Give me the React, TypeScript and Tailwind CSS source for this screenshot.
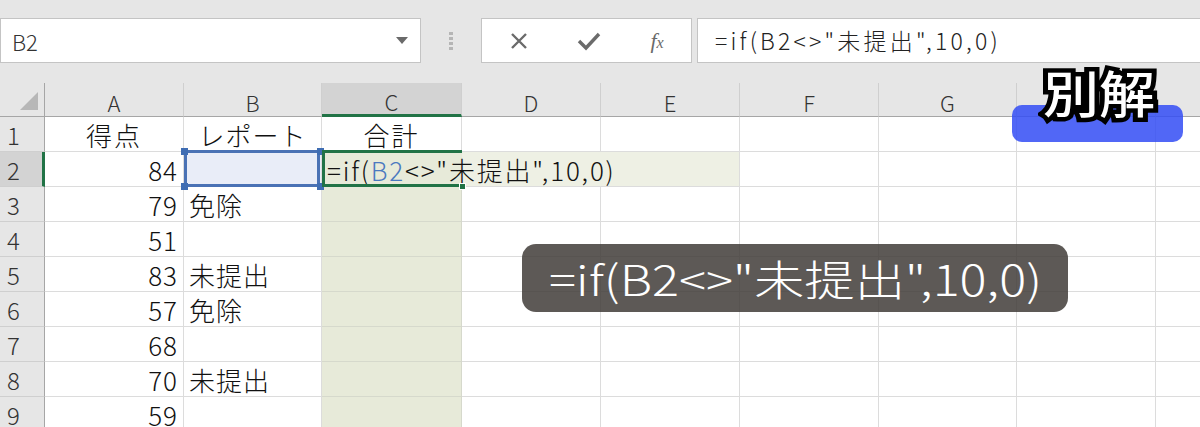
import React from 'react';

const FONT = '"Noto Sans CJK JP", "Liberation Sans", sans-serif';

type Row = { n: number; a?: string; b?: string; c?: string };

const rows: Row[] = [
  { n: 1, a: '得点', b: 'レポート', c: '合計' },
  { n: 2, a: '84' },
  { n: 3, a: '79', b: '免除' },
  { n: 4, a: '51' },
  { n: 5, a: '83', b: '未提出' },
  { n: 6, a: '57', b: '免除' },
  { n: 7, a: '68' },
  { n: 8, a: '70', b: '未提出' },
  { n: 9, a: '59' },
];

const cols = ['A', 'B', 'C', 'D', 'E', 'F', 'G', 'H', ''];

function Handle({ cls }: { cls: string }) {
  return <div className={`absolute w-[7px] h-[7px] bg-[#3f6db3] ${cls}`} />;
}

function TopBar() {
  return (
    <div className="h-[83px] bg-[#e6e6e6] flex items-start pt-[18px]">
      <div className="w-[421px] h-[45px] bg-white border border-[#c4c4c4] flex items-center justify-between pl-[11px] pr-[12px]">
        <span className="text-[22px] text-[#333] leading-none font-light">B2</span>
        <svg width="12" height="7" viewBox="0 0 12 7">
          <path d="M0 0 L12 0 L6 7 Z" fill="#6a6a6a" />
        </svg>
      </div>
      <div className="w-[60px] h-[45px] flex flex-col items-center justify-center gap-[2px]">
        <div className="w-[4px] h-[3px] bg-[#b5b5b5]" />
        <div className="w-[4px] h-[3px] bg-[#b5b5b5]" />
        <div className="w-[4px] h-[3px] bg-[#b5b5b5]" />
        <div className="w-[4px] h-[3px] bg-[#b5b5b5]" />
      </div>
      <div className="w-[211px] h-[45px] bg-white border border-[#c4c4c4] flex items-center">
        <div className="w-[72px] flex justify-center pl-[1px]">
          <svg width="20" height="20" viewBox="0 0 20 20">
            <path d="M3 3 L17 17 M17 3 L3 17" stroke="#6b6b6b" strokeWidth="2.4" />
          </svg>
        </div>
        <div className="w-[70px] flex justify-center">
          <svg width="24" height="20" viewBox="0 0 24 20">
            <path d="M2 10 L9 17 L22 3" stroke="#6b6b6b" strokeWidth="3.4" fill="none" />
          </svg>
        </div>
        <div className="w-[66px] flex justify-center">
          <span
            className="italic text-[22px] leading-none text-[#6a6a6a]"
            style={{ fontFamily: '"Liberation Serif", serif' }}
          >
            f<span className="text-[16px]">x</span>
          </span>
        </div>
      </div>
      <div className="ml-[5px] flex-1 h-[45px] bg-white border border-[#c4c4c4] border-r-0 flex items-center pl-[17px]">
        <span className="text-[23px] leading-none text-[#222] font-light tracking-[3.2px] whitespace-nowrap">
          =if(B2&lt;&gt;"未提出",10,0)
        </span>
      </div>
    </div>
  );
}

function Grid() {
  return (
    <div className="grid grid-cols-[45px_139px_138px_140px_139px_139px_139px_138px_139px_139px] grid-rows-[34px_repeat(9,35px)] w-[1295px]">
      {/* header row */}
      <div className="bg-[#e6e6e6] border-r border-b border-[#a6a6a6] relative">
        <svg className="absolute right-[6px] bottom-[6px]" width="18" height="18" viewBox="0 0 18 18">
          <path d="M18 0 L18 18 L0 18 Z" fill="#b7b7b7" />
        </svg>
      </div>
      {cols.map((c, i) => (
        <div
          key={i}
          className={`flex items-center justify-center text-[22px] font-light leading-none text-[#333] border-r border-[#cfcfcf] ${
            c === 'C' ? 'bg-[#d3d3d3] border-b-[3px] border-b-[#217346]' : 'bg-[#e6e6e6] border-b border-b-[#a6a6a6]'
          }`}
        >
          <span className="pt-[4px]">{c}</span>
        </div>
      ))}
      {rows.map((r) => (
        <React.Fragment key={r.n}>
          <div
            className={`flex items-end pl-[7px] pb-[4px] text-[24px] font-light leading-none text-[#333] border-b border-b-[#cfcfcf] ${
              r.n === 2 ? 'bg-[#d3d3d3] border-r-[3px] border-r-[#217346]' : 'bg-[#e6e6e6] border-r border-r-[#a6a6a6]'
            }`}
          >
            {r.n}
          </div>
          {/* A */}
          <div
            className={`flex items-end pb-[3px] px-[5px] text-[26px] font-light leading-none text-[#111] border-r border-b border-[#dcdcdc] ${
              r.n === 1 ? 'justify-center tracking-[2px]' : 'justify-end tracking-[1px]'
            }`}
          >
            {r.a}
          </div>
          {/* B */}
          {r.n === 2 ? (
            <div className="relative bg-[#e9edf8] border-r border-b border-[#dcdcdc]">
              <div className="absolute left-0 right-[1px] -top-[2px] h-[3px] bg-[#4a72b5]" />
              <div className="absolute left-0 right-[1px] -bottom-[1px] h-[3px] bg-[#4a72b5]" />
              <div className="absolute left-0 top-0 bottom-0 w-[3px] bg-[#4a72b5]" />
              <div className="absolute right-[1px] top-0 bottom-0 w-[3px] bg-[#4a72b5]" />
              <Handle cls="-left-[3px] -top-[4px]" />
              <Handle cls="-right-[3px] -top-[4px]" />
              <Handle cls="-left-[3px] -bottom-[4px]" />
              <Handle cls="-right-[3px] -bottom-[4px]" />
            </div>
          ) : (
            <div
              className={`flex items-end pb-[3px] px-[5px] text-[26px] font-light leading-none text-[#111] border-r border-b border-[#dcdcdc] ${
                r.n === 1 ? 'justify-center tracking-[1px]' : 'justify-start tracking-[1px]'
              }`}
            >
              {r.b}
            </div>
          )}
          {/* C */}
          {r.n === 2 ? (
            <div className="relative z-10 bg-[#e7ead9] border-b border-[#dcdcdc] flex items-end pb-[3px] pl-[5px] text-[26px] font-light leading-none text-[#111] whitespace-nowrap tracking-[1.8px]">
              <span className="relative">
                =if(<span className="text-[#4b79c0]">B2</span>&lt;&gt;"未提出",10,0)
              </span>
              <div className="absolute left-0 right-0 -top-[2px] h-[3px] bg-[#217346]" />
              <div className="absolute left-0 right-0 -bottom-[1px] h-[3px] bg-[#217346]" />
              <div className="absolute left-0 top-0 bottom-0 w-[3px] bg-[#217346]" />
              <div className="absolute -right-[4px] -bottom-[4px] w-[7px] h-[7px] bg-[#217346] border border-white" />
            </div>
          ) : (
            <div
              className={`flex items-end justify-center pb-[3px] text-[26px] font-light leading-none text-[#111] border-r border-b tracking-[2px] ${
                r.n === 1 ? 'bg-white border-[#dcdcdc]' : 'bg-[#e7ead9] border-[#d6d9cc]'
              }`}
            >
              {r.c}
            </div>
          )}
          {cols.slice(3).map((c, i) => (
            <div
              key={i}
              className={`border-b border-[#dcdcdc] ${
                r.n === 2 && (c === 'D' || c === 'E') ? 'bg-[#eef0e4]' : 'bg-white'
              } ${r.n === 2 && c === 'D' ? '' : 'border-r'}`}
            />
          ))}
        </React.Fragment>
      ))}
    </div>
  );
}

export default function App() {
  return (
    <div className="relative w-[1200px] h-[427px] overflow-hidden bg-white" style={{ fontFamily: FONT }}>
      <TopBar />
      <Grid />
      {/* formula caption */}
      <div className="absolute left-[522px] top-[244px] w-[546px] h-[68px] rounded-[14px] bg-[rgba(66,62,58,0.86)] flex items-center justify-center">
        <span className="inline-block text-white text-[42px] font-light leading-none scale-x-[1.2] whitespace-nowrap">
          =if(B2&lt;&gt;"未提出",10,0)
        </span>
      </div>
      {/* 別解 badge */}
      <div className="absolute left-[1012px] top-[105px] w-[171px] h-[37px] rounded-[10px] bg-[rgba(52,78,245,0.86)]" />
      <div className="absolute left-[1043px] top-[66px] origin-left scale-x-[1.12] text-[50px] font-medium leading-none text-white [-webkit-text-stroke:9px_black] [paint-order:stroke_fill]">
        別解
      </div>
    </div>
  );
}
